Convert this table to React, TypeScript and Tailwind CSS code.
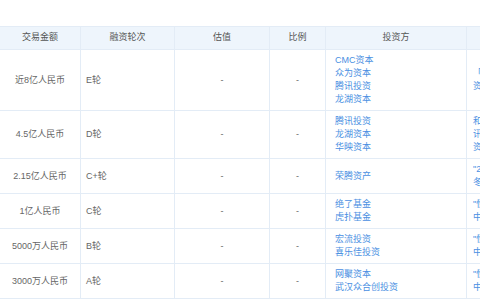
import React from "react";

type Row = { amt: string; round: string; inv: string[]; news: string[] };

const rows: Row[] = [
  { amt: "近8亿人民币", round: "E轮", inv: ["CMC资本", "众为资本", "腾讯投资", "龙湖资本"], news: ["「懂球帝」完成近8亿元E轮融资", "资本领投"] },
  { amt: "4.5亿人民币", round: "D轮", inv: ["腾讯投资", "龙湖资本", "华映资本"], news: ["和腾讯达成合作", "讯投资领投", "资本跟投"] },
  { amt: "2.15亿人民币", round: "C+轮", inv: ["荣腾资产"], news: ["\"2.15亿元C+轮融资", "冬季转会"] },
  { amt: "1亿人民币", round: "C轮", inv: ["绝了基金", "虎扑基金"], news: ["\"懂球帝\"完成1亿元", "中国足球"] },
  { amt: "5000万人民币", round: "B轮", inv: ["宏流投资", "喜乐佳投资"], news: ["\"懂球帝\"完成5000万", "中国足球"] },
  { amt: "3000万人民币", round: "A轮", inv: ["网聚资本", "武汉众合创投资"], news: ["\"懂球帝\"完成3000万", "中国足球"] },
];

const font = { fontFamily: '"Liberation Sans", Arial, "Noto Sans CJK SC", sans-serif' };

export default function App() {
  const th = "border border-[#e3ecf6] font-normal text-center text-[#555] h-[23px] p-0";
  const td = "border border-[#e3ecf6] py-[4px] align-middle leading-[13px]";
  return (
    <div className="w-[480px] h-[300px] overflow-hidden bg-white" style={font}>
      <div className="pt-[26px]">
        <table className="border-collapse table-fixed text-[9px] w-[600px] ml-[-1px]">
          <colgroup>
            <col className="w-[81px]" />
            <col className="w-[94px]" />
            <col className="w-[95px]" />
            <col className="w-[56px]" />
            <col className="w-[141px]" />
            <col className="w-[133px]" />
          </colgroup>
          <thead>
            <tr className="bg-[#eef5fc]">
              <th className={th}>交易金额</th>
              <th className={th}>融资轮次</th>
              <th className={th}>估值</th>
              <th className={th}>比例</th>
              <th className={th}>投资方</th>
              <th className={th}>新闻</th>
            </tr>
          </thead>
          <tbody className="text-[#666]">
            {rows.map((r, i) => (
              <tr key={i}>
                <td className={`${td} text-center`}>{r.amt}</td>
                <td className={`${td} px-[5px]`}>{r.round}</td>
                <td className={`${td} text-center`}>-</td>
                <td className={`${td} text-center`}>-</td>
                <td className={`${td} pl-[9px] text-[#4a8fe2]`}>
                  {r.inv.map((n, j) => (
                    <div key={j} className="whitespace-nowrap">{n}</div>
                  ))}
                </td>
                <td className={`${td} pl-[6px] text-[#4a8fe2]`}>
                  {r.news.map((n, j) => (
                    <div key={j} className="whitespace-nowrap overflow-hidden">{n}</div>
                  ))}
                </td>
              </tr>
            ))}
          </tbody>
        </table>
      </div>
    </div>
  );
}
